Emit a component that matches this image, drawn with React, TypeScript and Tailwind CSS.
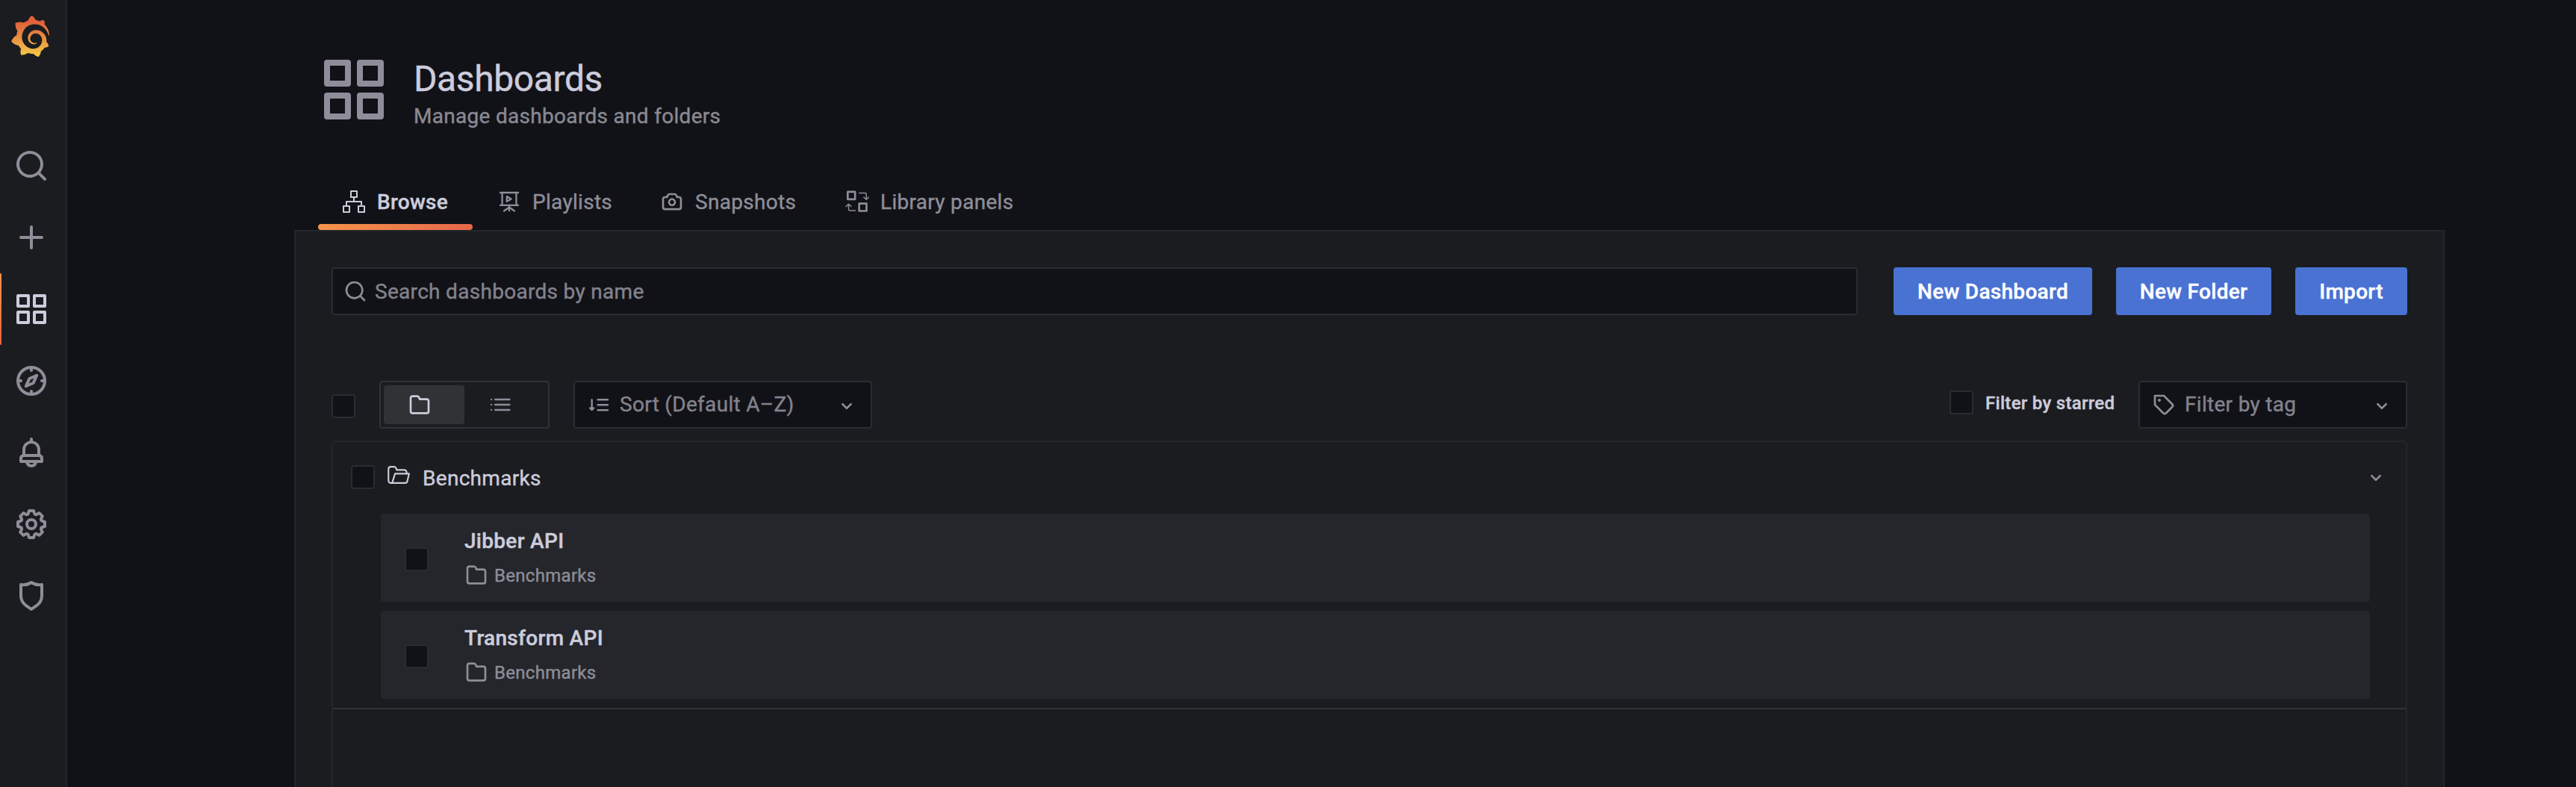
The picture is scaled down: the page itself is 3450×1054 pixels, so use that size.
import type { ReactNode } from 'react';
import { SiGrafana } from 'react-icons/si';

type IconProps = { children: ReactNode; className?: string };

const Icon = ({ children, className = 'size-8' }: IconProps) => (
  <svg viewBox="0 0 24 24" fill="currentColor" className={`shrink-0 ${className}`}>
    {children}
  </svg>
);

const stroke = {
  fill: 'none',
  stroke: 'currentColor',
  strokeWidth: 2,
  strokeLinecap: 'round',
  strokeLinejoin: 'round',
} as const;

const search = (
  <path d="M21.71,20.29,18,16.61A9,9,0,1,0,16.61,18l3.68,3.68a1,1,0,0,0,1.42,0A1,1,0,0,0,21.71,20.29ZM11,18a7,7,0,1,1,7-7A7,7,0,0,1,11,18Z" />
);
const plus = (
  <path d="M19,11H13V5a1,1,0,0,0-2,0v6H5a1,1,0,0,0,0,2h6v6a1,1,0,0,0,2,0V13h6a1,1,0,0,0,0-2Z" />
);
const apps = (
  <path d="M10,13H3a1,1,0,0,0-1,1v7a1,1,0,0,0,1,1h7a1,1,0,0,0,1-1V14A1,1,0,0,0,10,13ZM9,20H4V15H9ZM21,2H14a1,1,0,0,0-1,1v7a1,1,0,0,0,1,1h7a1,1,0,0,0,1-1V3A1,1,0,0,0,21,2ZM20,9H15V4h5Zm1,4H14a1,1,0,0,0-1,1v7a1,1,0,0,0,1,1h7a1,1,0,0,0,1-1V14A1,1,0,0,0,21,13Zm-1,7H15V15h5ZM10,2H3A1,1,0,0,0,2,3v7a1,1,0,0,0,1,1h7a1,1,0,0,0,1-1V3A1,1,0,0,0,10,2ZM9,9H4V4H9Z" />
);
const compass = (
  <g {...stroke}>
    <circle cx="12" cy="12" r="9" />
    <path d="M12 3v2M12 19v2M3 12h2M19 12h2" />
    <path d="M15.6 8.4l-4.9 2.1-2.3 5.1 4.9-2.1z" />
  </g>
);
const bell = (
  <path d="M18,13.18V10a6,6,0,0,0-5-5.91V3a1,1,0,0,0-2,0V4.09A6,6,0,0,0,6,10v3.18A3,3,0,0,0,4,16v2a1,1,0,0,0,1,1H8.14a4,4,0,0,0,7.72,0H19a1,1,0,0,0,1-1V16A3,3,0,0,0,18,13.18ZM8,10a4,4,0,0,1,8,0v3H8Zm4,10a2,2,0,0,1-1.72-1h3.44A2,2,0,0,1,12,20Zm6-3H6V16a1,1,0,0,1,1-1H17a1,1,0,0,1,1,1Z" />
);
const cog = (
  <path d="M21.32,9.55l-1.89-.63.89-1.78A1,1,0,0,0,20.13,6L18,3.87a1,1,0,0,0-1.15-.19l-1.78.89-.63-1.89A1,1,0,0,0,13.5,2h-3a1,1,0,0,0-.95.68L8.92,4.57,7.14,3.68A1,1,0,0,0,6,3.87L3.87,6a1,1,0,0,0-.19,1.15l.89,1.78-1.89.63A1,1,0,0,0,2,10.5v3a1,1,0,0,0,.68.95l1.89.63-.89,1.78A1,1,0,0,0,3.87,18L6,20.13a1,1,0,0,0,1.15.19l1.78-.89.63,1.89a1,1,0,0,0,.95.68h3a1,1,0,0,0,.95-.68l.63-1.89,1.78.89A1,1,0,0,0,18,20.13L20.13,18a1,1,0,0,0,.19-1.15l-.89-1.78,1.89-.63A1,1,0,0,0,22,13.5v-3A1,1,0,0,0,21.32,9.55ZM20,12.78l-1.2.4A2,2,0,0,0,17.64,16l.57,1.14-1.1,1.1L16,17.64a2,2,0,0,0-2.79,1.16l-.4,1.2H11.22l-.4-1.2A2,2,0,0,0,8,17.64l-1.14.57-1.1-1.1L6.36,16A2,2,0,0,0,5.2,13.18L4,12.78V11.22l1.2-.4A2,2,0,0,0,6.36,8L5.79,6.89l1.1-1.1L8,6.36A2,2,0,0,0,10.82,5.2l.4-1.2h1.56l.4,1.2A2,2,0,0,0,16,6.36l1.14-.57,1.1,1.1L17.64,8a2,2,0,0,0,1.16,2.79l1.2.4ZM12,8a4,4,0,1,0,4,4A4,4,0,0,0,12,8Zm0,6a2,2,0,1,1,2-2A2,2,0,0,1,12,14Z" />
);
const shield = (
  <path d="M19.63,3.65a1,1,0,0,0-.84-.2,8,8,0,0,1-6.22-1.27,1,1,0,0,0-1.14,0A8,8,0,0,1,5.21,3.45a1,1,0,0,0-.84.2A1,1,0,0,0,4,4.43v7.45a9,9,0,0,0,3.77,7.33l3.65,2.6a1,1,0,0,0,1.16,0l3.65-2.6A9,9,0,0,0,20,11.88V4.43A1,1,0,0,0,19.63,3.65ZM18,11.88a7,7,0,0,1-2.93,5.7L12,19.77,8.93,17.58A7,7,0,0,1,6,11.88V5.58a10,10,0,0,0,6-1.39,10,10,0,0,0,6,1.39Z" />
);
const sitemap = (
  <g {...stroke} strokeWidth={1.5}>
    <rect x="9" y="1.5" width="6" height="6" />
    <rect x="1.5" y="16.5" width="6" height="6" />
    <rect x="16.5" y="16.5" width="6" height="6" />
    <path d="M12 7.5V12M4.5 16.5V12h15v4.5" />
  </g>
);
const presentation = (
  <g {...stroke} strokeWidth={1.7}>
    <path d="M2.9 3h18.2M4.9 3v12.6M19.1 3v12.6M2.9 15.6h18.2M12 15.6v5.6M12 17.6l-5.2 3.8M12 17.6l5.2 3.8" />
    <path d="M9.6 6.8l4.4 2.500-4.400 2.600z" />
  </g>
);
const camera = (
  <path d="M19,6.5H17.72l-.32-1a3,3,0,0,0-2.84-2H9.44A3,3,0,0,0,6.6,5.55l-.32,1H5a3,3,0,0,0-3,3v8a3,3,0,0,0,3,3H19a3,3,0,0,0,3-3v-8A3,3,0,0,0,19,6.5Zm1,11a1,1,0,0,1-1,1H5a1,1,0,0,1-1-1v-8a1,1,0,0,1,1-1H7a1,1,0,0,0,1-.68l.54-1.64a1,1,0,0,1,.95-.68h5.12a1,1,0,0,1,.95.68l.54,1.64A1,1,0,0,0,17,8.5h2a1,1,0,0,1,1,1Zm-8-9a4,4,0,1,0,4,4A4,4,0,0,0,12,8.5Zm0,6a2,2,0,1,1,2-2A2,2,0,0,1,12,14.5Z" />
);
const libraryPanel = (
  <g {...stroke} strokeLinejoin="round">
    <rect x="2.5" y="2.2" width="7.4" height="7.4" strokeWidth="2" />
    <rect x="14" y="14" width="7.4" height="7.4" strokeWidth="2" />
    <path
      d="M14 3.3h6a1.2 1.2 0 0 1 1.2 1.2v5.3M18.7 7.6l2.5 2.4 2.5-2.4M10.2 21H4.6a1.2 1.2 0 0 1-1.2-1.2v-5.2M.9 16.8l2.5-2.4 2.5 2.4"
      strokeWidth="1.1"
    />
  </g>
);
const folder = (
  <path d="M19,5.5H12.72l-.32-1a3,3,0,0,0-2.84-2H5a3,3,0,0,0-3,3v13a3,3,0,0,0,3,3H19a3,3,0,0,0,3-3V8.5A3,3,0,0,0,19,5.5Zm1,13a1,1,0,0,1-1,1H5a1,1,0,0,1-1-1V5.5a1,1,0,0,1,1-1H9.56a1,1,0,0,1,.95.68l.54,1.64A1,1,0,0,0,12,7.5h7a1,1,0,0,1,1,1Z" />
);
const folderOpen = (
  <g {...stroke} strokeWidth={1.6}>
    <path d="M5.6 20.2H4A2.3 2.3 0 0 1 1.7 17.900V6A2.300 2.300 0 0 1 4 3.800H7.400A2 2 0 0 1 9.300 5.200L9.900 7H17.600A2.300 2.300 0 0 1 19.900 9.300V10.600" />
    <path d="M8.300 10.800H22.400L20.600 18.400A2.300 2.300 0 0 1 18.400 20.200H5.400Z" />
  </g>
);
const list = (
  <g {...stroke} strokeWidth={1.7}>
    <path d="M3 6.75h.01M3 12h.01M3 17.25h.01" />
    <path d="M6.800 6.750H21.400M6.800 12H21.400M6.800 17.250H21.400" />
  </g>
);
const sort = (
  <g {...stroke} strokeWidth={1.8}>
    <path d="M5 7v9.800" />
    <path d="M3.200 15.400l1.800 1.800 1.800-1.800z" />
    <path d="M11 6.900h10M11 12.150h10M11 17.400h10" />
  </g>
);
const tag = (
  <path d="M7.5,6A1.5,1.5,0,1,0,9,7.5,1.5,1.5,0,0,0,7.5,6Zm13.62,4.71L12.71,2.29A1,1,0,0,0,12,2H3A1,1,0,0,0,2,3v9a1,1,0,0,0,.29.71l8.42,8.41a3,3,0,0,0,4.24,0L21.12,15a3,3,0,0,0,0-4.24Zm-1.41,2.82h0l-6.18,6.17a1,1,0,0,1-1.41,0L4,11.59V4h7.59l8.12,8.12a1,1,0,0,1,.29.71A1,1,0,0,1,19.71,13.53Z" />
);
const angleDown = (
  <path d="M17,9.17a1,1,0,0,0-1.41,0L12,12.71,8.46,9.17a1,1,0,0,0-1.41,0,1,1,0,0,0,0,1.42l4.24,4.24a1,1,0,0,0,1.42,0L17,10.59A1,1,0,0,0,17,9.17Z" />
);

const Checkbox = ({ className = '' }: { className?: string }) => (
  <span
    role="checkbox"
    aria-checked="false"
    className={`block size-8 shrink-0 rounded-[4px] border-2 border-[#2b2c31] bg-[#111217] ${className}`}
  />
);

const navItems = [
  { name: 'Search', icon: search },
  { name: 'Create', icon: plus },
  { name: 'Dashboards', icon: apps, active: true },
  { name: 'Explore', icon: compass },
  { name: 'Alerting', icon: bell },
  { name: 'Configuration', icon: cog },
  { name: 'Server admin', icon: shield },
];

const tabs = [
  { label: 'Browse', icon: sitemap, width: 'w-[208px]', active: true },
  { label: 'Playlists', icon: presentation, width: 'w-[218px]' },
  { label: 'Snapshots', icon: camera, width: 'w-[248px]' },
  { label: 'Library panels', icon: libraryPanel, width: 'w-[290px]' },
];

const actions = [
  { label: 'New Dashboard', width: 'w-[266px]' },
  { label: 'New Folder', width: 'w-[208px]' },
  { label: 'Import', width: 'w-[150px]' },
];

const dashboards = ['Jibber API', 'Transform API'];

function Sidebar() {
  return (
    <nav className="flex w-[90px] shrink-0 flex-col border-r-2 border-[#25262b] bg-[#1b1c1f] text-[#8e8d99]">
      <svg width="0" height="0" className="absolute">
        <linearGradient id="flame" x1="0" y1="0" x2="0" y2="1">
          <stop offset="0.15" stopColor="#e0603a" />
          <stop offset="0.5" stopColor="#e78a42" />
          <stop offset="1" stopColor="#f5cc48" />
        </linearGradient>
      </svg>
      <div className="flex h-[174px] pt-[21px] pl-[13px]">
        <SiGrafana className="size-[55px]" style={{ fill: 'url(#flame)' }} />
      </div>
      {navItems.map((item) => (
        <a
          key={item.name}
          aria-label={item.name}
          className={`relative flex h-24 items-center pl-[18px] ${item.active ? 'text-[#ccccdc]' : ''}`}
        >
          {item.active && (
            <span className="absolute top-0 left-0 h-24 w-[2px] rounded-[2px] bg-linear-to-b from-[#f2954a] to-[#e4613f]" />
          )}
          <Icon className="size-12">{item.icon}</Icon>
        </a>
      ))}
    </nav>
  );
}

function PageHeader() {
  return (
    <header className="flex h-[236px] items-start gap-8 pt-[72px] pl-8">
      <Icon className="size-24 text-[#8e8d99]">{apps}</Icon>
      <div className="pt-1">
        <h1 className="text-[48px] leading-[60px] tracking-[-0.4px] text-[#ccccdc]">Dashboards</h1>
        <p className="text-[28px] leading-[40px] text-[#8a8993]">Manage dashboards and folders</p>
      </div>
    </header>
  );
}

function Tabs() {
  return (
    <div className="flex h-[72px] pl-8">
      {tabs.map((tab) => (
        <div
          key={tab.label}
          className={`relative flex items-start pt-[18px] pl-8 ${tab.width} ${
            tab.active ? 'font-medium text-[#ccccdc]' : 'text-[#8e8d99]'
          }`}
        >
          <Icon>{tab.icon}</Icon>
          <span className="pt-px pl-[15px] text-[28px] leading-8 whitespace-nowrap">{tab.label}</span>
          {tab.active && (
            <span className="absolute bottom-0 left-0 h-2 w-[207px] rounded-[4px] bg-linear-to-r from-[#f4944a] to-[#e6674a]" />
          )}
        </div>
      ))}
    </div>
  );
}

function Toolbar() {
  return (
    <div className="flex h-16 items-start">
      <Checkbox className="mt-[18px]" />
      <div className="ml-8 flex h-16 w-[228px] rounded-[4px] border-2 border-[#313237] p-1">
        <div className="flex w-[108px] items-center rounded-[4px] bg-[#313236] pl-8 text-[#ccccdc]">
          <Icon>{folder}</Icon>
        </div>
        <div className="flex items-center pl-8 text-[#8e8d99]">
          <Icon>{list}</Icon>
        </div>
      </div>
      <div className="ml-8 flex h-16 w-[400px] items-center rounded-[4px] border-2 border-[#2b2c33] bg-[#111217] pr-4 pl-4 text-[#8e8d99]">
        <Icon>{sort}</Icon>
        <span className="flex-1 pl-3 text-[28px] text-[#83828d]">Sort (Default A–Z)</span>
        <Icon className="mt-1 size-8">{angleDown}</Icon>
      </div>
      <Checkbox className="mt-[13px] ml-auto" />
      <span className="w-[221px] pt-3 pl-4 text-[24px] leading-9 font-medium whitespace-nowrap text-[#ccccdc]">
        Filter by starred
      </span>
      <div className="flex h-16 w-[360px] items-center rounded-[4px] border-2 border-[#2b2c33] bg-[#111217] px-4 text-[#8e8d99]">
        <Icon>{tag}</Icon>
        <span className="flex-1 pl-3 text-[28px] text-[#83828d]">Filter by tag</span>
        <Icon className="mt-1 size-8">{angleDown}</Icon>
      </div>
    </div>
  );
}

function DashboardCard({ name }: { name: string }) {
  return (
    <article className="flex h-[118px] rounded-[4px] bg-[#25262b] pl-8">
      <Checkbox className="mt-[45px]" />
      <div className="pt-[17px] pl-12">
        <h2 className="text-[28px] leading-10 font-medium text-[#ccccdc]">{name}</h2>
        <div className="flex items-start pt-[9px] text-[#8e8d99]">
          <Icon>{folder}</Icon>
          <span className="pt-px pl-2 text-[24px] leading-8">Benchmarks</span>
        </div>
      </div>
    </article>
  );
}

function Results() {
  return (
    <section className="mt-4 flex-1 rounded-t-[6px] border-2 border-b-0 border-[#25262b]">
      <div className="border-b-2 border-[#313236] pb-3">
        <div className="flex h-24 items-start pr-6 pl-6">
          <Checkbox className="mt-[31px]" />
          <Icon className="mt-7 ml-4 size-8 text-[#ccccdc]">{folderOpen}</Icon>
          <span className="flex-1 pt-[29px] pl-4 text-[28px] leading-10 text-[#ccccdc]">Benchmarks</span>
          <Icon className="mt-8 size-8 text-[#8e8d99]">{angleDown}</Icon>
        </div>
        <div className="flex flex-col gap-3 pr-12 pl-16">
          {dashboards.map((name) => (
            <DashboardCard key={name} name={name} />
          ))}
        </div>
      </div>
    </section>
  );
}

export default function App() {
  return (
    <div className="flex h-[1054px] w-[3450px] overflow-hidden bg-[#111217] font-[Roboto,sans-serif] tracking-[0.3px] [-webkit-text-stroke:0.4px]">
      <Sidebar />
      <main className="ml-[304px] flex w-[2880px] flex-col">
        <PageHeader />
        <Tabs />
        <div className="flex flex-1 flex-col border-2 border-b-0 border-[#25262b] bg-[#1b1c1f] px-12 pt-12">
          <div className="flex h-16 items-center gap-8">
            <div className="mr-4 flex h-16 flex-1 items-center rounded-[4px] border-2 border-[#2b2c33] bg-[#111217] pl-[14px] text-[#8e8d99]">
              <Icon>{search}</Icon>
              <span className="pt-px pl-[10px] text-[28px] text-[#83828d]">Search dashboards by name</span>
            </div>
            {actions.map((action) => (
              <button
                key={action.label}
                className={`h-16 rounded-[4px] bg-[#4a72d3] pt-px text-[28px] font-medium text-white ${action.width}`}
              >
                {action.label}
              </button>
            ))}
          </div>
          <div className="mt-[88px]">
            <Toolbar />
          </div>
          <Results />
        </div>
      </main>
    </div>
  );
}
